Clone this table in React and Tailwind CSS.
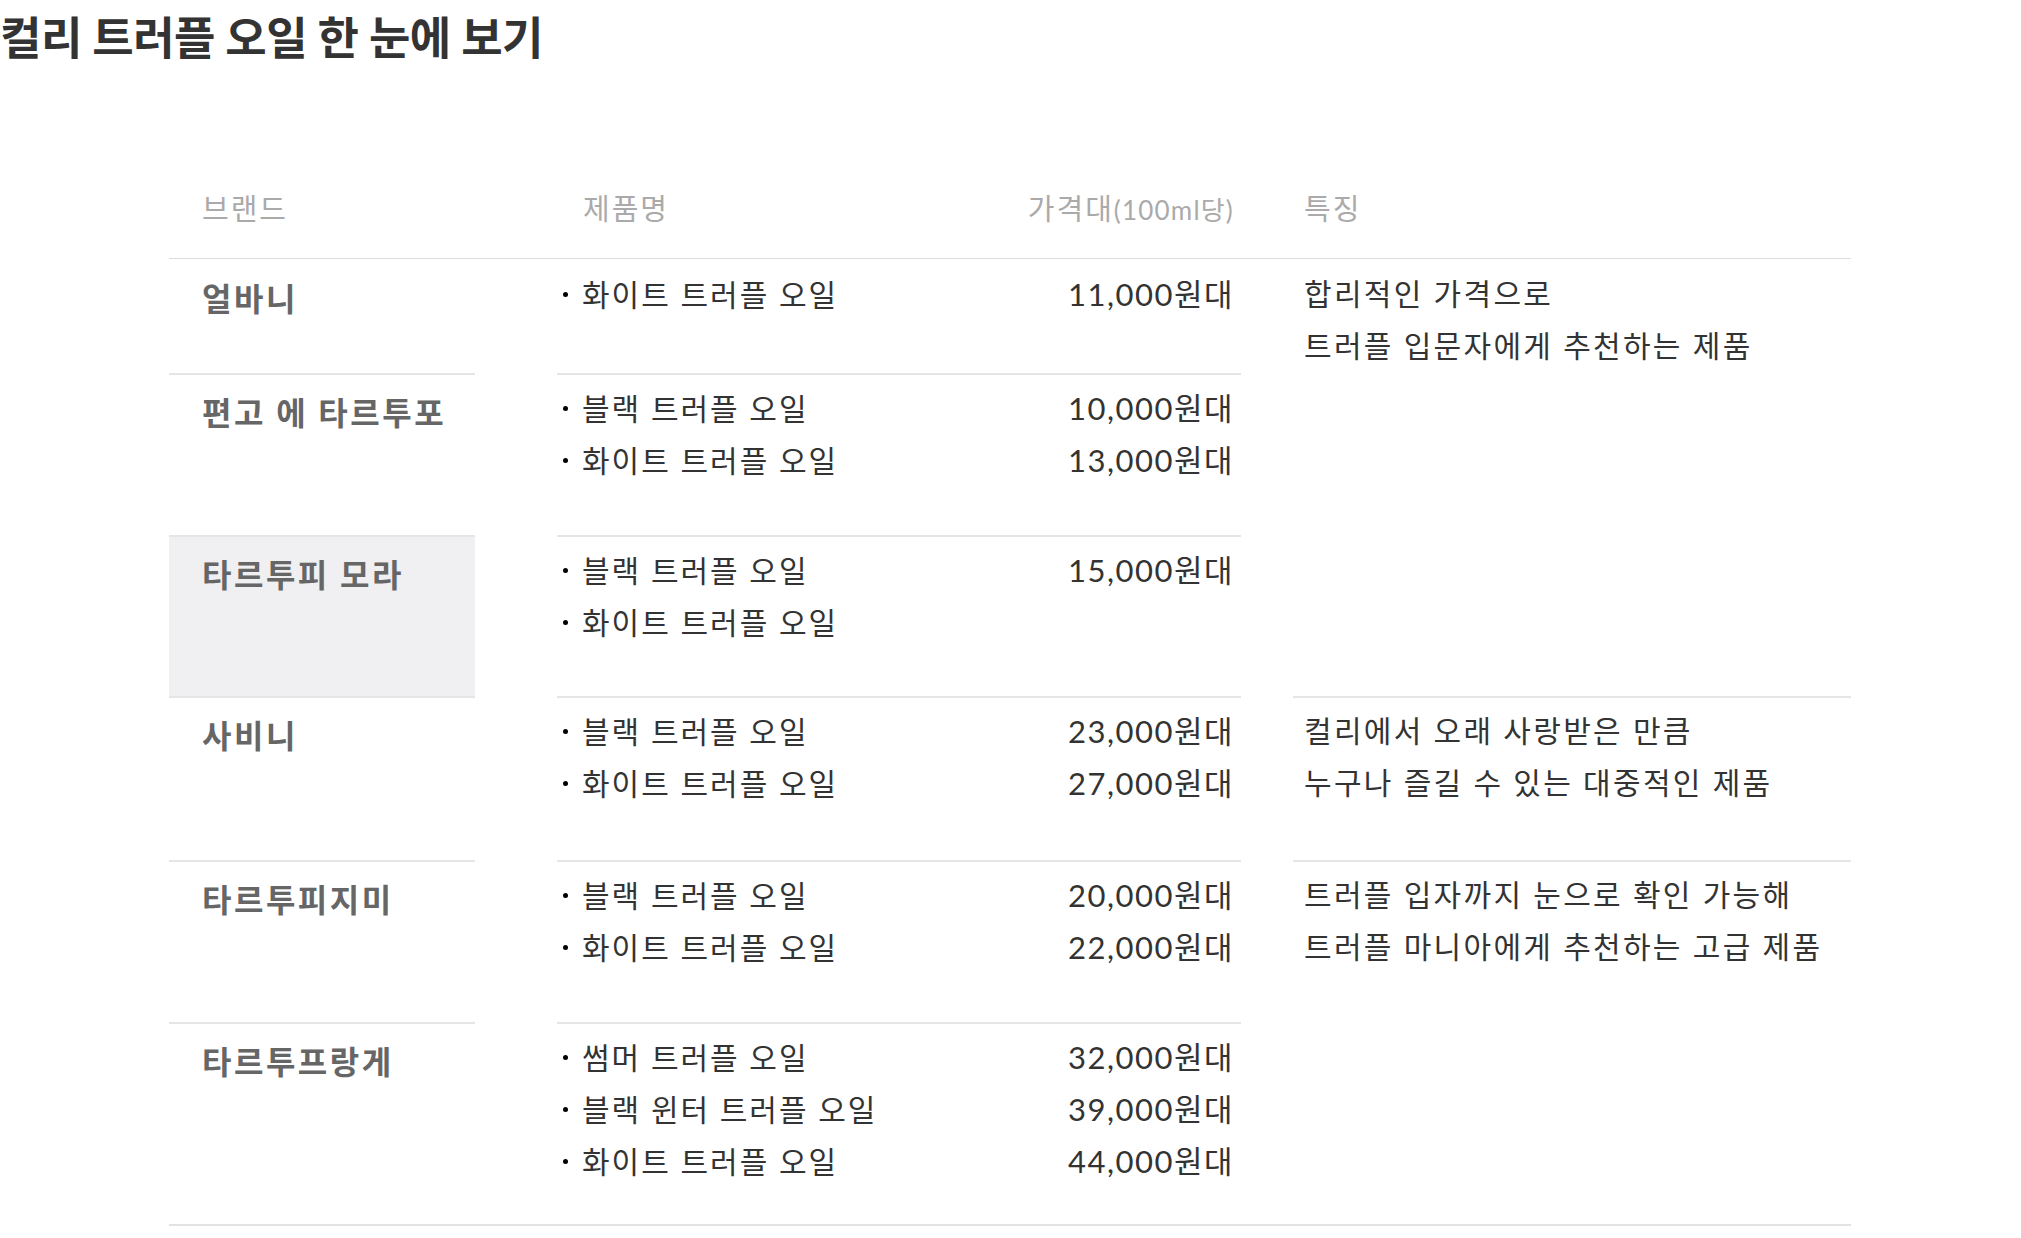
import React from "react";

const rows = [
  { brand: "얼바니", row: "row-start-1", items: [["화이트 트러플 오일", "11,000원대"]] },
  {
    brand: "편고 에 타르투포",
    row: "row-start-2",
    items: [
      ["블랙 트러플 오일", "10,000원대"],
      ["화이트 트러플 오일", "13,000원대"],
    ],
  },
  {
    brand: "타르투피 모라",
    row: "row-start-3",
    active: true,
    items: [
      ["블랙 트러플 오일", "15,000원대"],
      ["화이트 트러플 오일", ""],
    ],
  },
  {
    brand: "사비니",
    row: "row-start-4",
    items: [
      ["블랙 트러플 오일", "23,000원대"],
      ["화이트 트러플 오일", "27,000원대"],
    ],
  },
  {
    brand: "타르투피지미",
    row: "row-start-5",
    items: [
      ["블랙 트러플 오일", "20,000원대"],
      ["화이트 트러플 오일", "22,000원대"],
    ],
  },
  {
    brand: "타르투프랑게",
    row: "row-start-6",
    items: [
      ["썸머 트러플 오일", "32,000원대"],
      ["블랙 윈터 트러플 오일", "39,000원대"],
      ["화이트 트러플 오일", "44,000원대"],
    ],
  },
];

const features = [
  { cls: "row-start-1 row-span-3", first: true, lines: ["합리적인 가격으로", "트러플 입문자에게 추천하는 제품"] },
  { cls: "row-start-4 row-span-1", lines: ["컬리에서 오래 사랑받은 만큼", "누구나 즐길 수 있는 대중적인 제품"] },
  { cls: "row-start-5 row-span-2", lines: ["트러플 입자까지 눈으로 확인 가능해", "트러플 마니아에게 추천하는 고급 제품"] },
];

export default function App() {
  return (
    <div className="min-h-screen bg-white font-['Lato','Noto_Sans_CJK_KR',sans-serif] text-[#333]">
      <h2 className="pt-[16px] text-[45px] leading-none font-bold tracking-[-0.5px] text-[#333]">
        컬리 트러플 오일 한 눈에 보기
      </h2>

      <div className="ml-[169px] mt-[128px] w-[1682px]">
        {/* Header */}
        <div className="grid grid-cols-[306px_82px_684px_52px_558px] border-b border-[#dcdcdc] pb-[28px] text-[29px] leading-[40px] tracking-[2px] text-[#aaa]">
          <div className="col-start-1 pl-[33px]">브랜드</div>
          <div className="col-start-3 flex justify-between pl-[26px] pr-[7px]">
            <span>제품명</span>
            <span>
              가격대<span className="text-[26px] tracking-[1.2px]">(100ml당)</span>
            </span>
          </div>
          <div className="col-start-5 pl-[11px]">특징</div>
        </div>

        {/* Body */}
        <div className="grid grid-cols-[306px_82px_684px_52px_558px] grid-rows-[114px_162px_161px_164px_162px_202px] border-b-2 border-[#e3e3e3]">
          {rows.map((r, i) => (
            <React.Fragment key={r.brand}>
              <div
                className={`col-start-1 ${r.row} pl-[33px] text-[32px] font-bold leading-[52px] tracking-[2.5px] text-[#666] ${
                  i === 0 ? "pt-[14px]" : "border-t-2 border-[#e5e5e5] pt-[12px]"
                } ${r.active ? "bg-[#f0eff1]" : ""}`}
              >
                {r.brand}
              </div>
              <div
                className={`col-start-3 ${r.row} pl-[6px] pr-[7px] text-[30px] leading-[52px] ${
                  i === 0 ? "pt-[9px]" : "border-t-2 border-[#e5e5e5] pt-[7px]"
                }`}
              >
                {r.items.map(([name, price]) => (
                  <div key={name + price} className="flex items-center justify-between">
                    <div className="flex items-center">
                      <span className="mr-[14px] h-[5px] w-[5px] rounded-full bg-black" />
                      <span className="tracking-[2px]">{name}</span>
                    </div>
                    <span className="text-[31px] tracking-[1.5px]">{price}</span>
                  </div>
                ))}
              </div>
            </React.Fragment>
          ))}

          {features.map((f) => (
            <div
              key={f.cls}
              className={`col-start-5 ${f.cls} pl-[11px] text-[30px] leading-[52px] tracking-[2.3px] ${
                f.first ? "pt-[8px]" : "border-t-2 border-[#e5e5e5] pt-[6px]"
              }`}
            >
              {f.lines.map((l) => (
                <div key={l}>{l}</div>
              ))}
            </div>
          ))}
        </div>
      </div>
    </div>
  );
}
